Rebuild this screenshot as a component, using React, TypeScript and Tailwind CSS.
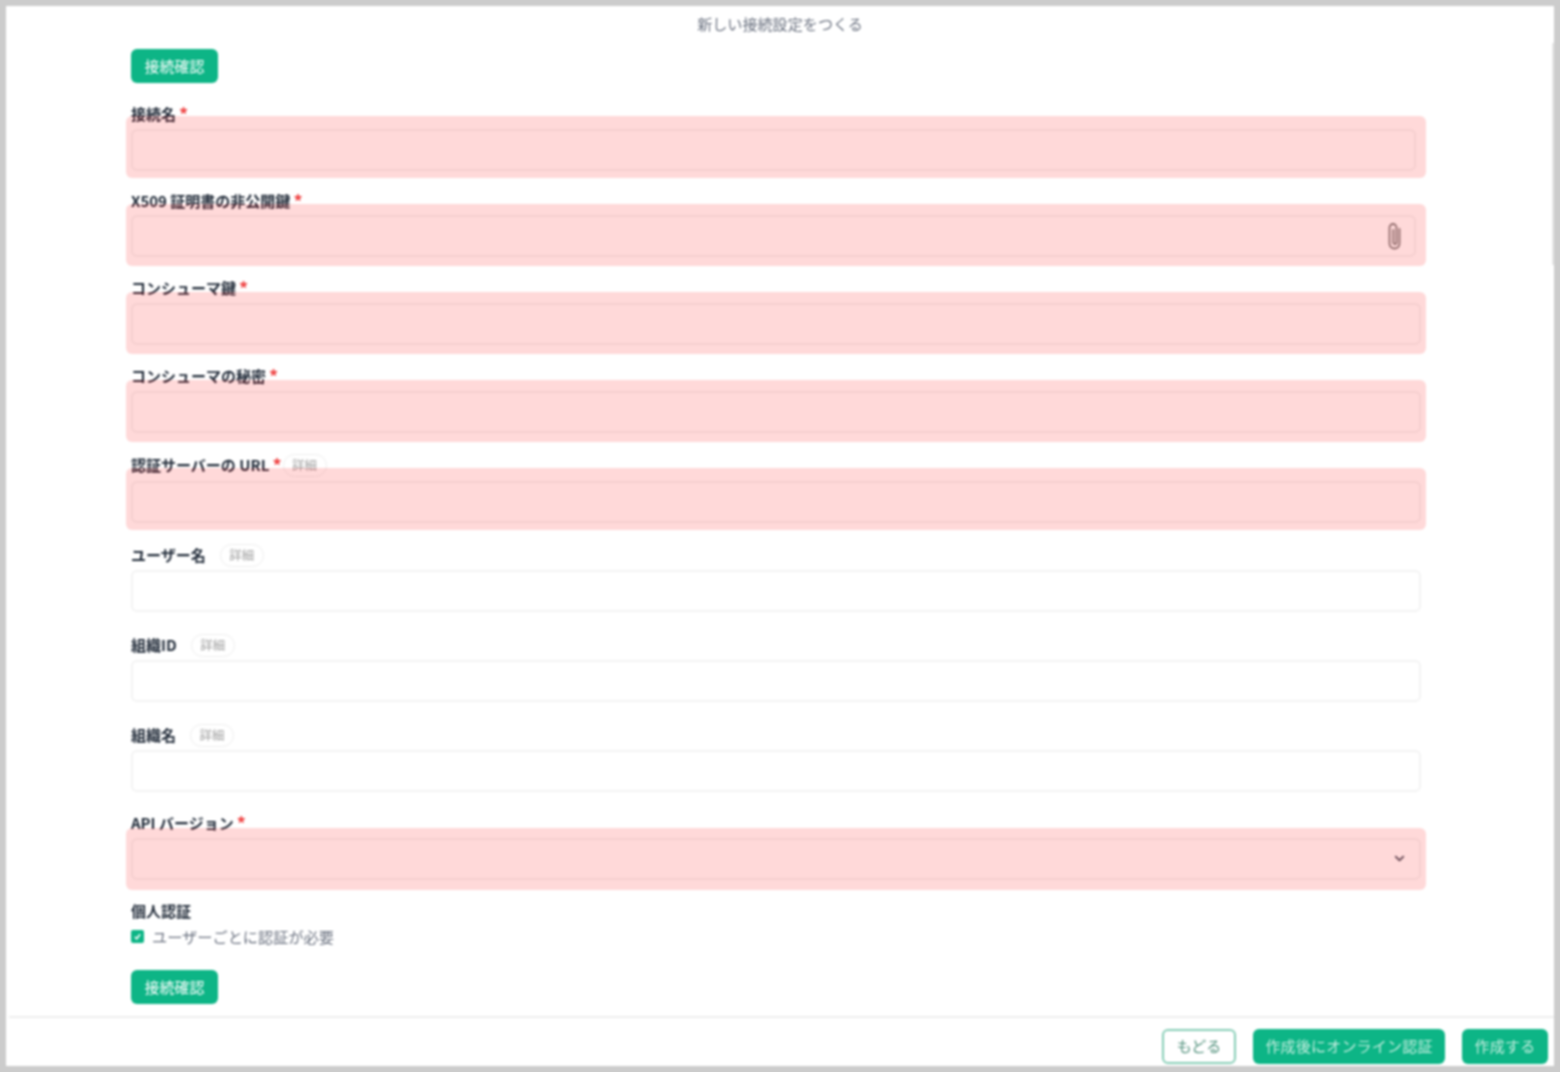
import React from 'react';
import { ChevronDown } from 'lucide-react';

const fontClass = "font-['Noto_Sans_CJK_JP','Noto_Sans',sans-serif]";

interface FieldProps {
    label: string;
    required?: boolean;
    detail?: boolean;
    marginClass: string;
    widthClass?: string;
    overlayClass?: string;
    labelGapClass?: string;
    children?: React.ReactNode;
}

const DetailBadge = ({ className }: { className: string }) => (
    <span className={`flex items-center justify-center w-[44px] h-[23px] rounded-full border border-[#eeeeee] text-[12.5px] text-[#a0a0a0] ${className}`}>
        詳細
    </span>
);

const Field: React.FC<FieldProps> = ({
    label,
    required,
    detail,
    marginClass,
    widthClass = 'w-[1290px]',
    overlayClass,
    labelGapClass = 'mb-[5px]',
    children,
}) => (
    <div className={marginClass}>
        <div className={`flex items-center h-[20px] ${labelGapClass}`}>
            <span className="text-[15px] font-bold text-[#1f2937] whitespace-nowrap">{label}</span>
            {required && <span className="ml-[3px] text-[18px] leading-[20px] font-bold text-[#ef4444]">*</span>}
            {detail && <DetailBadge className={required ? 'ml-[1px]' : 'ml-[14px]'} />}
        </div>
        <div className={`relative h-[42px] ${widthClass}`}>
            <input
                type="text"
                readOnly
                className="w-full h-full rounded-md border-2 border-[#f3f3f3] bg-white outline-none"
            />
            {children}
            {/* validation highlight */}
            {overlayClass && <div className={`absolute rounded-md bg-[#ff0000]/15 ${overlayClass}`} />}
        </div>
    </div>
);

const App: React.FC = () => {
    return (
        <div className={`h-[1072px] w-[1560px] bg-[#cccccc] p-[6px] overflow-hidden ${fontClass}`}>
            <div className="relative flex flex-col h-full bg-white blur-[0.8px]">
                <div className="flex-1 overflow-hidden pl-[125px]">
                    <h1 className="h-[36px] w-[1548px] -ml-[125px] leading-[35px] text-center text-[15.1px] font-normal text-[#6b7280]">
                        新しい接続設定をつくる
                    </h1>
                    <button className="block mt-[7px] w-[87px] h-[34px] rounded-md bg-[#0db586] text-[15px] text-white">
                        接続確認
                    </button>

                    <Field
                        label="接続名"
                        required
                        marginClass="mt-[21px]"
                        widthClass="w-[1285px]"
                        overlayClass="-left-[5px] -right-[10px] -top-[13px] -bottom-[7px]"
                    />
                    <Field
                        label="X509 証明書の非公開鍵"
                        required
                        marginClass="mt-[20px]"
                        widthClass="w-[1285px]"
                        labelGapClass="mb-[4px]"
                        overlayClass="-left-[5px] -right-[10px] -top-[11px] -bottom-[9px]"
                    >
                        <svg
                            className="absolute right-[14px] top-[7px]"
                            width="16"
                            height="28"
                            viewBox="0 0 16 28"
                            fill="none"
                            stroke="#808080"
                            strokeWidth="1.8"
                            strokeLinecap="round"
                        >
                            <path d="M13.5 7v14.5a5 5 0 0 1-10 0V5.5a3.5 3.5 0 0 1 7 0v15a1.6 1.6 0 0 1-3.2 0V8" />
                        </svg>
                    </Field>
                    <Field
                        label="コンシューマ鍵"
                        required
                        marginClass="mt-[21px]"
                        overlayClass="-left-[5px] -right-[5px] -top-[11px] -bottom-[9px]"
                    />
                    <Field
                        label="コンシューマの秘密"
                        required
                        marginClass="mt-[21px]"
                        overlayClass="-left-[5px] -right-[5px] -top-[11px] -bottom-[9px]"
                    />
                    <Field
                        label="認証サーバーの URL"
                        required
                        detail
                        marginClass="mt-[22px]"
                        labelGapClass="mb-[6px]"
                        overlayClass="-left-[5px] -right-[5px] -top-[13px] -bottom-[7px]"
                    />
                    <Field label="ユーザー名" detail marginClass="mt-[22px]" />
                    <Field label="組織ID" detail marginClass="mt-[23px]" />
                    <Field label="組織名" detail marginClass="mt-[23px]" />
                    <Field
                        label="API バージョン"
                        required
                        marginClass="mt-[21px]"
                        overlayClass="-left-[5px] -right-[5px] -top-[10px] -bottom-[10px]"
                    >
                        <ChevronDown
                            className="absolute right-[14px] top-[13px] text-[#4b5563]"
                            size={15}
                            strokeWidth={3}
                        />
                    </Field>

                    <div className="mt-[21px] h-[20px] flex items-center text-[15px] font-bold text-[#1f2937]">個人認証</div>
                    <label className="mt-[5px] h-[20px] flex items-center gap-[8px] text-[15.2px] text-[#6b7280]">
                        <span className="flex items-center justify-center w-[13px] h-[13px] rounded-[2px] bg-[#0db586]">
                            <svg width="9" height="9" viewBox="0 0 12 12" fill="none" stroke="white" strokeWidth="2">
                                <path d="M2.5 6.5 5 9l4.5-6" />
                            </svg>
                        </span>
                        ユーザーごとに認証が必要
                    </label>
                    <button className="block mt-[24px] w-[87px] h-[34px] rounded-md bg-[#0db586] text-[15px] text-white">
                        接続確認
                    </button>
                </div>

                <div className="flex items-start justify-end gap-[17px] h-[50px] ml-[3px] pt-[11px] pr-[6px] border-t-2 border-[#eeeeee]">
                    <button className="w-[74px] h-[35px] rounded-md border-2 border-[#86cdb6] bg-white text-[15px] text-[#4f8f7a]">
                        もどる
                    </button>
                    <button className="w-[192px] h-[35px] rounded-md bg-[#0db586] text-[15px] tracking-[0.2px] text-[#c5eddf]">
                        作成後にオンライン認証
                    </button>
                    <button className="w-[86px] h-[35px] rounded-md bg-[#0db586] text-[15px] tracking-[0.2px] text-[#c5eddf]">
                        作成する
                    </button>
                </div>

                {/* scrollbar thumb */}
                <div className="absolute right-0 top-[37px] w-[2px] h-[222px] bg-[#e6e6e6]" />
            </div>
        </div>
    );
};

export default App;
